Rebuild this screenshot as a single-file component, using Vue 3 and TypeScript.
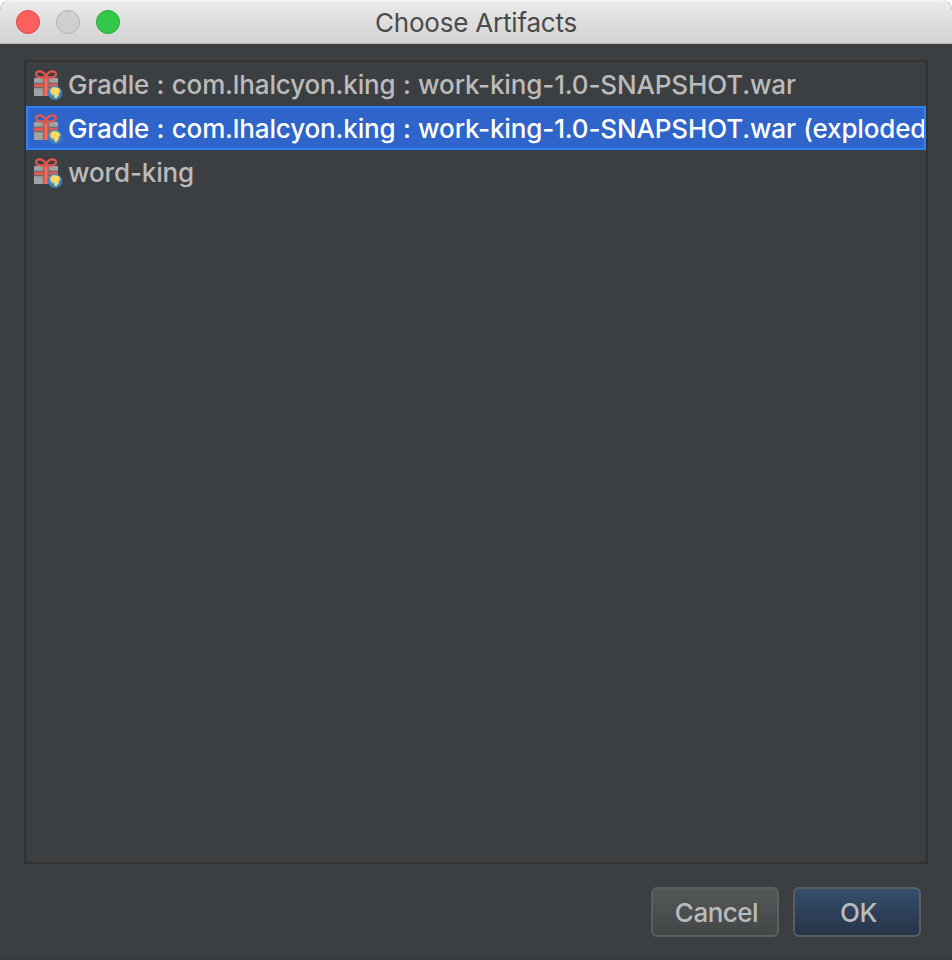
<script setup lang="ts">
import { ref } from 'vue'

interface Artifact {
  id: number
  name: string
}

const artifacts: Artifact[] = [
  { id: 1, name: 'Gradle : com.lhalcyon.king : work-king-1.0-SNAPSHOT.war' },
  { id: 2, name: 'Gradle : com.lhalcyon.king : work-king-1.0-SNAPSHOT.war (exploded)' },
  { id: 3, name: 'word-king' },
]

const selected = ref<number>(2)
</script>

<template>
  <div class="window">
    <header class="titlebar">
      <div class="lights">
        <span class="light close"></span>
        <span class="light minimize"></span>
        <span class="light zoom"></span>
      </div>
      <h1 class="title">Choose Artifacts</h1>
    </header>
    <main class="content">
      <ul class="list">
        <li
          v-for="item in artifacts"
          :key="item.id"
          class="row"
          :class="{ selected: item.id === selected }"
          @click="selected = item.id"
        >
          <svg class="icon" viewBox="0 0 32 32" width="32" height="32">
            <path d="M2 10h24v18H2z" fill="#a0a2a3" />
            <path d="M2 15.200h24M2 19.700h24" stroke="#54595c" stroke-width="1" />
            <path d="M2 17.400h24" stroke="#dc5a50" stroke-width="3.400" />
            <path d="M11.300 10v18M16.700 10v18" stroke="#7b6b6c" stroke-width="1" />
            <path d="M14 9v19" stroke="#e2574d" stroke-width="4.400" />
            <path d="M14 11v17" stroke="#ee8478" stroke-width="1.200" />
            <path
              d="M14 9.200C10.500 10.200 4.200 9.500 4 6.300C3.900 2.300 11.500 1.800 14 8.700C16.500 1.800 24.100 2.300 24 6.300C23.800 9.500 17.500 10.200 14 9.200z"
              fill="none"
              stroke="#e2574d"
              stroke-width="2.300"
            />
            <circle cx="23.100" cy="24.900" r="7.100" fill="#3c83c4" />
            <circle cx="22.200" cy="23.500" r="5" fill="#60a2d5" />
            <path
              d="M18.200 22.300l2.300-2.700 3.600-.3 3.200 1.500 1.200 2.700-1.600 1.200-.3 2.600-2.300 3.100-1.600-.7-.5-3.200-3.200-.7z"
              fill="#fbd95e"
            />
          </svg>
          <span class="name">{{ item.name }}</span>
        </li>
      </ul>
    </main>
    <footer class="actions">
      <button class="btn cancel" type="button">Cancel</button>
      <button class="btn ok" type="button">OK</button>
    </footer>
  </div>
</template>

<style>
body {
  background: #fff;
}
</style>

<style scoped>
.window {
  box-sizing: border-box;
  display: flex;
  flex-direction: column;
  width: 952px;
  height: 960px;
  overflow: hidden;
  border-radius: 10px 10px 0 0;
  border-bottom: 2px solid #37393a;
  background: #3c3f41;
  font-family: Inter, 'Liberation Sans', sans-serif;
  font-size: 26px;
  font-feature-settings: 'calt' 0;
}
.titlebar {
  box-sizing: border-box;
  flex: none;
  display: grid;
  grid-template-columns: 1fr auto 1fr;
  align-items: center;
  height: 44px;
  padding: 0 16px;
  background: linear-gradient(#ebebeb, #d2d2d2);
  border-bottom: 1px solid #b5b5b5;
  box-shadow: inset 0 2px #f5f5f5;
}
.lights {
  display: flex;
  gap: 16px;
}
.light {
  box-sizing: border-box;
  width: 24px;
  height: 24px;
  border-radius: 50%;
  border: 1px solid;
}
.close {
  background: #fc605c;
  border-color: #df4744;
}
.minimize {
  background: #d0d0d0;
  border-color: #b0b0b0;
}
.zoom {
  background: #34c84a;
  border-color: #20aa33;
}
.title {
  margin: 0;
  padding-top: 2px;
  font-size: 26px;
  line-height: 32px;
  font-weight: 400;
  letter-spacing: -0.2px;
  color: #4a4a4a;
}
.content {
  flex: 1;
  min-height: 0;
  padding: 16px 24px 0;
}
.list {
  box-sizing: border-box;
  height: 804px;
  margin: 0;
  padding: 0;
  list-style: none;
  overflow: hidden;
  border: 2px solid #323232;
}
.row {
  box-sizing: border-box;
  display: flex;
  align-items: center;
  gap: 4px;
  height: 44px;
  padding-left: 6px;
  border: 0 solid transparent;
  border-width: 2px 2px 2px 0;
  overflow: hidden;
  color: #bbb;
}
.row.selected {
  background: #2f65ca;
  border-width: 2px;
  border-color: #2e83f9;
  padding-left: 4px;
  color: #fff;
}
.icon {
  flex: none;
}
.name {
  flex: none;
  padding-top: 2px;
  line-height: 32px;
  font-weight: 450;
  letter-spacing: -0.14px;
  word-spacing: 0.6px;
  white-space: pre;
}
.actions {
  display: flex;
  justify-content: flex-end;
  gap: 14px;
  padding: 0 31px 21px 0;
}
.btn {
  box-sizing: border-box;
  width: 128px;
  height: 50px;
  padding: 0 0 0 3px;
  border: 2px solid #5c5f60;
  border-radius: 6px;
  font: inherit;
  font-weight: 450;
  letter-spacing: -0.5px;
  color: #bbb;
}
.cancel {
  background: linear-gradient(#535758, #434748) padding-box;
}
.ok {
  background: linear-gradient(#364e6d, #263449) padding-box;
}
</style>
